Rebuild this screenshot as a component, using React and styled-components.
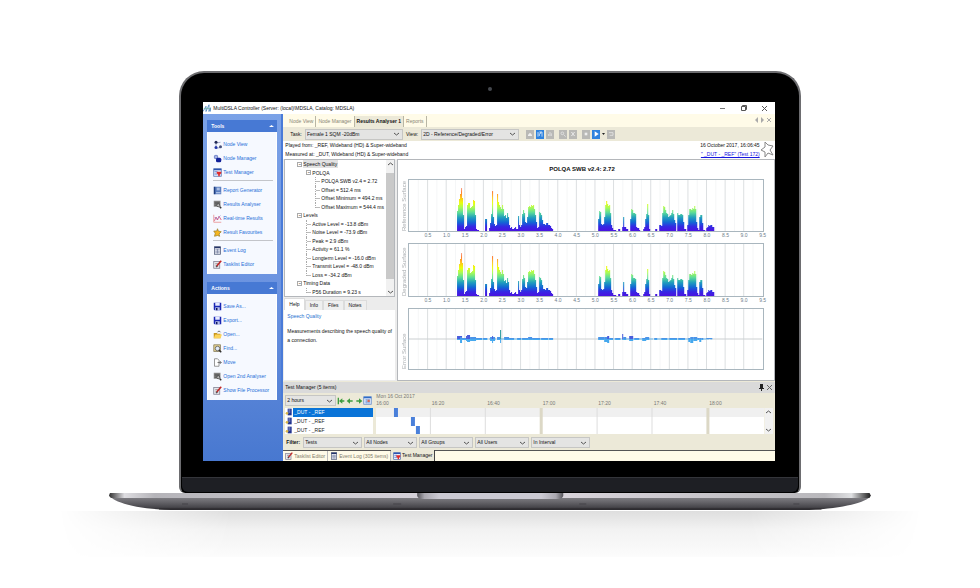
import React from 'react'
import styled, { createGlobalStyle } from 'styled-components'

const sidebar = [
	{
		title: 'Tools',
		items: [
			{ icon: 'nodes', text: 'Node View' },
			{ icon: 'manager', text: 'Node Manager' },
			{ icon: 'test', text: 'Test Manager' },
			null,
			{ icon: 'report', text: 'Report Generator' },
			{ icon: 'analyser', text: 'Results Analyser' },
			{ icon: 'chart', text: 'Real-time Results' },
			{ icon: 'star', text: 'Result Favourites' },
			null,
			{ icon: 'log', text: 'Event Log' },
			{ icon: 'edit', text: 'Tasklist Editor' },
		],
	},
	{
		title: 'Actions',
		items: [
			{ icon: 'save', text: 'Save As...' },
			{ icon: 'save', text: 'Export...' },
			{ icon: 'open', text: 'Open...' },
			{ icon: 'find', text: 'Find...' },
			{ icon: 'move', text: 'Move' },
			{ icon: 'analyser', text: 'Open 2nd Analyser' },
			{ icon: 'edit', text: 'Show File Processor' },
		],
	},
]

const tree = [
	{ level: 0, text: 'Speech Quality', selected: true },
	{ level: 1, text: 'POLQA' },
	{ level: 2, text: 'POLQA SWB v2.4 = 2.72' },
	{ level: 2, text: 'Offset = 512.4 ms' },
	{ level: 2, text: 'Offset Minimum = 494.2 ms' },
	{ level: 2, text: 'Offset Maximum = 544.4 ms', last: true },
	{ level: 0, text: 'Levels' },
	{ level: 1, leaf: true, text: 'Active Level = -13.8 dBm' },
	{ level: 1, leaf: true, text: 'Noise Level = -73.9 dBm' },
	{ level: 1, leaf: true, text: 'Peak = 2.9 dBm' },
	{ level: 1, leaf: true, text: 'Activity = 61.1 %' },
	{ level: 1, leaf: true, text: 'Longterm Level = -16.0 dBm' },
	{ level: 1, leaf: true, text: 'Transmit Level = -48.0 dBm' },
	{ level: 1, leaf: true, text: 'Loss = -34.2 dBm', last: true },
	{ level: 0, text: 'Timing Data' },
	{ level: 1, leaf: true, text: 'P56 Duration = 9.23 s', last: true },
]

// [position, height] steps of the speech envelope
const envelope = [
	[48, 20], [49, 26], [50, 32], [51, 37], [52, 43], [53, 33], [54, 16], [55, 2], [56, 4], [57, 5],
	[58, 26], [59, 28], [60, 28], [61, 23], [62, 24], [63, 25], [64, 31], [65, 30], [66, 16], [67, 2],
	[68, 1], [70, 0], [76, 12], [78, 0], [80, 3], [81, 8], [82, 17], [83, 40], [84, 14], [85, 7],
	[86, 5], [87, 6], [88, 37], [89, 29], [90, 26], [91, 24], [92, 22], [93, 26], [94, 22], [95, 15],
	[96, 16], [97, 13], [98, 18], [99, 14], [100, 6], [101, 3], [102, 4], [103, 2], [105, 3], [106, 4],
	[107, 2], [109, 15], [110, 6], [111, 4], [112, 6], [113, 17], [114, 21], [115, 18], [116, 9],
	[117, 8], [118, 14], [119, 24], [120, 25], [121, 24], [122, 26], [123, 25], [124, 26], [125, 22],
	[126, 16], [127, 9], [128, 3], [129, 4], [130, 19], [131, 18], [132, 16], [133, 11], [134, 7],
	[136, 6], [137, 8], [139, 6], [141, 5], [142, 3], [143, 2], [144, 0],
	[189, 12], [190, 20], [191, 19], [192, 7], [193, 6], [194, 7], [195, 14], [196, 26], [197, 30],
	[198, 27], [199, 25], [200, 26], [201, 18], [202, 6], [203, 3], [204, 1], [207, 0], [209, 2],
	[211, 0], [213, 4], [214, 14], [215, 4], [217, 2], [219, 0], [221, 12], [222, 22], [223, 21],
	[224, 18], [226, 17], [227, 4], [228, 3], [230, 1], [231, 0], [234, 2], [235, 4], [236, 12],
	[237, 17], [238, 27], [239, 16], [240, 2], [241, 0], [246, 2], [248, 0], [250, 6], [252, 5],
	[253, 18], [254, 25], [255, 24], [256, 21], [257, 18], [258, 17], [259, 14], [260, 15], [261, 16],
	[262, 18], [263, 21], [264, 17], [265, 11], [266, 8], [267, 0], [268, 18], [269, 16], [271, 17],
	[273, 16], [274, 9], [275, 2], [277, 0], [278, 6], [279, 16], [280, 22], [282, 21], [283, 23],
	[284, 22], [285, 25], [286, 22], [287, 9], [288, 3], [289, 1], [290, 14], [291, 16], [293, 8],
	[294, 1], [296, 0], [297, 3], [298, 4], [299, 6], [300, 5], [301, 6], [303, 4], [305, 0],
]

// [position, width, above, below]
const errors = [
	[48, 5, 3, 1], [51, 2, 2, 4], [53, 4, 1, 1], [57, 1, 3, 2], [58, 3, 4, 3], [61, 6, 2, 2],
	[67, 6, 1, 1], [74, 4, 1, 1], [81, 5, 2, 2], [83, 1, 3, 4], [88, 3, 2, 1], [91, 1, 9, 4],
	[95, 5, 2, 1], [100, 5, 1, 1], [108, 4, 1, 1], [113, 6, 1, 1], [119, 4, 2, 1], [123, 8, 1, 1],
	[132, 7, 1, 1], [140, 4, 1, 1], [189, 6, 2, 1], [195, 4, 2, 3], [198, 2, 3, 4], [200, 4, 1, 1],
	[206, 5, 1, 1], [213, 1, 5, 1], [214, 3, 2, 1], [220, 4, 3, 2], [225, 5, 1, 1], [233, 4, 1, 2],
	[236, 4, 2, 1], [245, 3, 1, 1], [252, 6, 1, 1], [260, 8, 1, 1], [269, 7, 1, 1], [279, 2, 1, 3],
	[281, 3, 2, 4], [284, 4, 2, 2], [288, 2, 1, 1], [290, 2, 1, 3], [292, 2, 1, 1], [297, 6, 1, 0],
]

const axis = Array.from({ length: 19 }, (_, i) => ((i + 1) / 2).toFixed(1))
const times = ['16:00', '16:20', '16:40', '17:00', '17:20', '17:40', '18:00']
const filters = [
	['Tests', 59], ['All Nodes', 53], ['All Groups', 54], ['All Users', 54], ['In Interval', 59],
]
const toolIcons = ['disk', 'wave', 'bars', null, 'zoomin', 'zoomout', null, 'stop', 'play', 'drop', 'loop']

function envelopePath(height) {
	let d = `M0 ${height}`
	envelope.forEach(([x, h]) => {
		d += `H${x}V${height - h}`
	})
	return `${d}V${height}Z`
}

function Icon({ name, size = 9 }) {
	const art = {
		nodes: <g><path d="M4 4l6-1M4 5v6M5 11l5-1" stroke="#8a93b8" /><circle cx="4" cy="3" r="2" fill="#222a55" /><circle cx="4" cy="10" r="2" fill="#2438a8" /><circle cx="10" cy="9" r="2" fill="#46507a" /></g>,
		manager: <g><circle cx="4" cy="4" r="3" fill="#7d8fd0" /><rect x="4" y="5" width="7" height="6" rx="2" fill="#12229a" /><circle cx="4" cy="4" r="1" fill="#e8edff" /></g>,
		test: <g><rect x="1" y="1" width="10" height="10" fill="#e9eefc" stroke="#4a6db0" /><path d="M1 2h10" stroke="#2d54b0" strokeWidth="2" /><path d="M2 5h4M2 8h4" stroke="#3a66c8" /><path d="M5 5h6v2L9 9v2H7V9L5 7z" fill="#e02b2b" /></g>,
		calendar: <g><rect x="1" y="1" width="10" height="10" fill="#dfe8fb" stroke="#5d86c8" /><path d="M1 2h10" stroke="#2f6cc8" strokeWidth="2" /><path d="M3 5h6M3 7h6M3 9h6M5 4v6M8 4v6" stroke="#7fa0d8" /><rect x="6" y="5" width="3" height="3" fill="#d66a5a" /></g>,
		report: <g><rect x="2" y="1" width="9" height="10" fill="#5c7fc0" /><rect x="1" y="1" width="2" height="10" fill="#1e3d80" /><path d="M5 3h4M5 5h4M4 9h6" stroke="#e9f0ff" /></g>,
		analyser: <g><rect x="1" y="1" width="9" height="8" fill="#8d8d8d" /><path d="M2 3h7M2 5h7M2 7h5" stroke="#444" /><circle cx="7" cy="7" r="2" fill="#bbb" stroke="#444" /><path d="M9 9l2 2" stroke="#333" strokeWidth="2" /></g>,
		chart: <g><path d="M1 1v10h10" stroke="#e78787" fill="none" /><path d="M2 9l2-5 2 4 2-5 3 5" stroke="#d83a5a" fill="none" /><path d="M2 4l3 3 5-5" stroke="#9a8bd8" fill="none" /></g>,
		star: <path d="M6 1l1 3 4 1-3 3 1 3-3-1-4 1 1-4-2-3 4 0z" fill="#f6b61e" stroke="#9c8130" />,
		log: <g><rect x="2" y="1" width="8" height="10" fill="#f3f5fa" stroke="#4a5675" /><path d="M2 2h8" stroke="#253468" strokeWidth="2" /><path d="M3 5h6M3 7h6M3 9h6M6 4v6" stroke="#7c86a6" /></g>,
		edit: <g><rect x="1" y="2" width="8" height="9" fill="#e8e8ee" stroke="#7b7b8c" /><path d="M3 5h4M3 8h4" stroke="#777" /><path d="M11 1L5 8" stroke="#c42626" strokeWidth="2" /><path d="M5 7l-1 3 2-1z" fill="#222" /></g>,
		save: <g><path d="M1 1h10v10H2l-1-1z" fill="#1926b4" /><rect x="3" y="1" width="6" height="4" fill="#e6eaff" /><rect x="3" y="7" width="6" height="4" fill="#b9c2ea" /><rect x="4" y="8" width="2" height="3" fill="#101860" /></g>,
		open: <g><path d="M1 4h4l1 1h4v6H1z" fill="#c7951c" /><path d="M3 6h9l-2 5H1z" fill="#fbd35a" /><path d="M6 3c1-2 3-2 4 0" fill="none" stroke="#444" /></g>,
		find: <g><path d="M1 1h9v9H1z" fill="#e3cf8b" stroke="#83795c" /><circle cx="6" cy="6" r="3" fill="#dfeafa" stroke="#555" /><path d="M8 8l3 3" stroke="#333" strokeWidth="2" /></g>,
		move: <g><path d="M2 1h4l2 2v8H2z" fill="#fff" stroke="#777" /><path d="M6 6h5M9 4l2 2-2 2" fill="none" stroke="#555" /></g>,
		node: <g><rect x="4" y="1" width="6" height="10" fill="#22338f" /><path d="M5 3h3M5 6h3" stroke="#e9ecff" /><circle cx="3" cy="8" r="2" fill="#d8b64a" /></g>,
		disk: <path d="M3 9V7l3-3 3 3v2z" fill="#eee" />,
		wave: <path d="M3 3v7M5 5v4M7 3v3M9 3v7M5 3h4" stroke="#fff" fill="none" />,
		bars: <path d="M4 9V6M6 9V3M8 9V5" stroke="#eee" />,
		zoomin: <path d="M3 5a2 2 0 104 0 2 2 0 10-4 0M7 7l3 3" stroke="#eee" fill="none" />,
		zoomout: <path d="M3 3l6 6M9 3L3 9M6 3v6" stroke="#eee" />,
		stop: <rect x="4" y="4" width="4" height="4" fill="#eee" />,
		play: <path d="M4 2l6 4-6 4z" fill="#fff" />,
		loop: <path d="M3 4h6v4H4" stroke="#eee" fill="none" />,
		logo: <g fill="none" stroke="#3e7cb8"><path d="M0 10l4-7v7M4 10l4-9v9M8 10l2-5v5" /><path d="M1 6h9" stroke="#75b9a5" /></g>,
		arrow: <path d="M1 6l5-4v3h4v2H6v3z" fill="#3f9c3f" />,
		arrowr: <path d="M11 6L6 2v3H2v2h4v3z" fill="#3f9c3f" />,
		first: <g><path d="M2 1v10" stroke="#3f9c3f" strokeWidth="2" /><path d="M3 6l5-4v3h3v2H8v3z" fill="#3f9c3f" /></g>,
	}
	return <svg width={size} height={size} viewBox="0 0 12 12" aria-hidden="true">{art[name]}</svg>
}

function Grid({ height }) {
	return (
		<g>
			{Array.from({ length: 37 }, (_, i) => (
				<path key={i} d={`M${(i + 1) * 353 / 38} 0V${height}`} stroke={i % 2 ? '#dcdfe1' : '#f5f6f7'} />
			))}
		</g>
	)
}

function Surface({ label, height, name }) {
	return (
		<>
			<AxisName $above={8}>{label}</AxisName>
			<div>
				<Plot height={height} viewBox={`0 0 353 ${height}`} preserveAspectRatio="none" role="img" aria-label={label}>
					<linearGradient id={name} gradientUnits="userSpaceOnUse" x1="0" x2="0" y1={height} y2={height - 44}>
						<stop offset="0" stopColor="#4a12e0" />
						<stop offset=".1" stopColor="#3528e4" />
						<stop offset=".2" stopColor="#1268d4" />
						<stop offset=".31" stopColor="#22a0bc" />
						<stop offset=".42" stopColor="#5cdc98" />
						<stop offset=".53" stopColor="#a8fa58" />
						<stop offset=".64" stopColor="#eaff08" />
						<stop offset=".76" stopColor="#ffc21c" />
						<stop offset=".88" stopColor="#ff7a2a" />
						<stop offset="1" stopColor="#f7a79c" />
					</linearGradient>
					<Grid height={height} />
					<path d={envelopePath(height)} fill={`url(#${name})`} />
				</Plot>
				<Axis>{axis.map((a) => <span key={a}>{a}</span>)}</Axis>
			</div>
		</>
	)
}

function Drop({ label, value, width }) {
	return (
		<DropBox $width={width}>
			<select aria-label={label} defaultValue={value}><option>{value}</option></select>
			<Chevron />
		</DropBox>
	)
}

function Chevron({ up }) {
	return <svg width="5" height="4" viewBox="0 0 5 4"><path d={up ? 'M0 3l2.500-2L5 3' : 'M0 1l2.500 2L5 1'} fill="none" stroke="#555" /></svg>
}

function Sidebar() {
	return (
		<Side>
			{sidebar.map((group) => (
				<Group key={group.title}>
					<GroupTitle>{group.title}<svg width="5" height="4" viewBox="0 0 5 4"><path d="M0 3l2.500-2L5 3z" fill="#fff" /></svg></GroupTitle>
					<GroupBody>
						{group.items.map((item, i) => item
							? <SideLink href="#" key={i}><Icon name={item.icon} />{item.text}</SideLink>
							: <Rule key={i} />)}
					</GroupBody>
				</Group>
			))}
		</Side>
	)
}

function Results() {
	return (
		<Split>
			<Left>
				<TreeBox>
					<Tree>
						{tree.map((n) => (
							<Branch key={n.text} $level={n.level} $selected={n.selected} $last={n.last}>
								{n.leaf || n.level === 2 ? <i /> : <b>−</b>}<span>{n.text}</span>
							</Branch>
						))}
					</Tree>
					<Scroll><Chevron up /><div /><Chevron /></Scroll>
				</TreeBox>
				<InfoTabs>
					<InfoTab $on>Help</InfoTab><InfoTab>Info</InfoTab><InfoTab>Files</InfoTab><InfoTab>Notes</InfoTab>
				</InfoTabs>
				<Help>
					<h2>Speech Quality</h2>
					<p>Measurements describing the speech quality of a connection.</p>
				</Help>
			</Left>
			<Charts>
				<ChartTitle>POLQA SWB v2.4: 2.72</ChartTitle>
				<ChartGrid>
					<Surface label="Reference Surface" name="ref" height={51} />
					<Surface label="Degraded Surface" name="deg" height={52} />
					<AxisName $above={0}>Error Surface</AxisName>
					<Plot height={60} viewBox="0 0 353 60" preserveAspectRatio="none" role="img" aria-label="Error Surface">
						<Grid height={60} />
						<path d="M0 30H353" stroke="#ccd0d2" />
						<path d="M48 30H144M189 30H303" stroke="#6cbcf0" strokeDasharray="7 1" />
						{errors.map(([x, w, up, down]) => (
							<g key={x}>
								<rect x={x} y={30 - up} width={w} height={up} fill={up > 6 ? '#299c9c' : up > 2 ? '#4a5cdc' : '#4a94e8'} />
								<rect x={x} y={30} width={w} height={down} fill="#46a8ee" />
							</g>
						))}
					</Plot>
				</ChartGrid>
			</Charts>
		</Split>
	)
}

function TestManager() {
	return (
		<Dock>
			<DockTitle>Test Manager (5 items)
				<span>
					<svg width="5" height="7" viewBox="0 0 5 7"><path d="M1 0h3v4h1v1H0V4h1zM2 5h1v2H2z" fill="#222" /></svg>
					<svg width="5" height="5" viewBox="0 0 5 5"><path d="M0 0l5 5M5 0L0 5" stroke="#666" /></svg>
				</span>
			</DockTitle>
			<Schedule>
				<ScheduleTools>
					<Drop label="Duration" value="2 hours" width={51} />
					<Icon name="first" size={8} /><Icon name="arrow" size={8} /><Icon name="arrowr" size={8} /><Icon name="calendar" size={9} />
				</ScheduleTools>
				<TimeHead>
					<div>Mon 16 Oct 2017</div>
					<Times>{times.map((t) => <span key={t}>{t}</span>)}</Times>
				</TimeHead>
				<Rows>
					{[0, 1, 2].map((i) => <Row key={i} $on={i === 0}><Icon name="node" size={8} /><span>_DUT - _REF</span></Row>)}
				</Rows>
				<Timeline>
					<svg width="100%" height="26" viewBox="0 0 389 26" preserveAspectRatio="none">
						<rect width="389" height="26" fill="#fff" />
						<rect width="389" height="9" fill="#f0f0f0" />
						<path d="M54.500 0v26M109.500 0v26M221.500 0v26M276.500 0v26" stroke="#ddd" />
						<path d="M165.500 0v26M332.500 0v26" stroke="#dcd8c6" strokeWidth="3" />
						<path d="M18 0h4v9h-4zM35 9h4v9h-4zM40 18h4v8h-4z" fill="#4a80da" />
					</svg>
					<Scroll><Chevron up /><Chevron /></Scroll>
				</Timeline>
			</Schedule>
			<Filters>
				<b>Filter:</b>
				{filters.map(([f, w]) => <Drop key={f} label={f} value={f} width={w} />)}
			</Filters>
			<DockTabs>
				<DockTab><Icon name="edit" size={8} />Tasklist Editor</DockTab>
				<DockTab><Icon name="log" size={8} />Event Log (305 items)</DockTab>
				<DockTab $on><Icon name="test" size={8} />Test Manager</DockTab>
			</DockTabs>
		</Dock>
	)
}

function Base() {
	return (
		<BaseSvg viewBox="0 0 762 18" preserveAspectRatio="none" aria-hidden="true">
			<linearGradient id="under" x1="0" x2="0" y1="0" y2="1">
				<stop offset="0" stopColor="#8b8a8f" />
				<stop offset=".45" stopColor="#68676c" />
				<stop offset=".8" stopColor="#48474c" />
				<stop offset="1" stopColor="#2c2b2f" />
			</linearGradient>
			<linearGradient id="deck">
				<stop offset="0" stopColor="#333" />
				<stop offset=".02" stopColor="#dedde1" />
				<stop offset=".06" stopColor="#b5b4b9" />
				<stop offset=".4" stopColor="#d4d0d8" />
				<stop offset=".6" stopColor="#d8d3da" />
				<stop offset=".94" stopColor="#b9b8bc" />
				<stop offset=".975" stopColor="#dfe0e2" />
				<stop offset="1" stopColor="#222" />
			</linearGradient>
			<linearGradient id="notch">
				<stop offset="0" stopColor="#55545a" />
				<stop offset=".05" stopColor="#aaa8b0" />
				<stop offset=".15" stopColor="#cbc9d2" />
				<stop offset=".85" stopColor="#cbc9d2" />
				<stop offset=".95" stopColor="#aaa8b0" />
				<stop offset="1" stopColor="#55545a" />
			</linearGradient>
			<path d="M0 2C4 9 26 16 62 17H700C736 15 758 9 762 2z" fill="url(#under)" />
			<path d="M1 0H760Q762 2 760 5H2Q-1 3 1 0z" fill="url(#deck)" />
			<path d="M308 0H454V3Q453 6 449 6H313Q309 6 308 3z" fill="url(#notch)" />
			<path d="M50 16H712" stroke="#2b292d" />
			<path d="M73 11h6M284 11h8M470 11h7M684 11h6" stroke="#444348" />
		</BaseSvg>
	)
}

function App() {
	return (
		<Stage>
			<GlobalStyle />
			<Lid>
				<Camera />
				<Screen>
					<TitleBar>
						<Icon name="logo" size={9} />
						<h1>MultiDSLA Controller (Server: (local)\MDSLA, Catalog: MDSLA)</h1>
						<WindowButton aria-label="Minimise"><svg width="6" height="6"><path d="M0 3.500h5" stroke="#777" /></svg></WindowButton>
						<WindowButton aria-label="Restore"><svg width="6" height="6"><path d="M.5 1.500h4v4h-4zM1.500 1.500v-1h4v4h-1" fill="none" stroke="#555" /></svg></WindowButton>
						<WindowButton aria-label="Close"><svg width="5" height="5"><path d="M0 0l5 5M5 0L0 5" stroke="#555" /></svg></WindowButton>
					</TitleBar>
					<Body>
						<Sidebar />
						<Main>
							<Tabs>
								<Tab>Node View</Tab><Tab>Node Manager</Tab><Tab $on>Results Analyser 1</Tab><Tab>Reports</Tab>
								<svg width="17" height="6" viewBox="0 0 17 6"><path d="M3 0v6L0 3zM6 0v6l3-3z" fill="#aaa" /><path d="M12 1l4 4M16 1l-4 4" stroke="#aaa" /></svg>
							</Tabs>
							<Toolbar>
								<span>Task:</span><Drop label="Task" value="Female 1 SQM -20dBm" width={98} />
								<span>View:</span><Drop label="View" value="2D - Reference/Degraded/Error" width={98} />
								<Tools>
									{toolIcons.map((t, i) => {
										if (!t) return <Gap key={i} />
										if (t === 'drop') return <svg key={t} width="3" height="3" viewBox="0 0 3 3"><path d="M0 0h3L1.500 2z" fill="#222" /></svg>
										return <ToolButton key={t} aria-label={t} $blue={t === 'wave' || t === 'play'}><Icon name={t} size={8} /></ToolButton>
									})}
								</Tools>
							</Toolbar>
							<Summary>
								<div>Played from: _REF, Wideband (HD) &amp; Super-wideband<br />Measured at: _DUT, Wideband (HD) &amp; Super-wideband</div>
								<Stamp>16 October 2017, 16:06:45<br /><a href="#">" _DUT - _REF" (Test 172)</a></Stamp>
								<svg width="14" height="17" viewBox="0 0 14 17"><path d="M5 1l3 3 5 1-3 4 3 5-5-2-3 4V11L1 9l4-3z" fill="#fff" stroke="#888" /></svg>
							</Summary>
							<Results />
							<TestManager />
						</Main>
					</Body>
				</Screen>
				<Chin />
			</Lid>
			<Base />
			<Shadow />
		</Stage>
	)
}

const GlobalStyle = createGlobalStyle`
	* { box-sizing: border-box; }
	body {
		margin: 0;
		background: #fff;
		font-family: "Liberation Sans", Arial, sans-serif;
		font-size: 5px;
		line-height: 9px;
		color: #111;
	}
	svg { display: block; flex: none; }
	button { border: 0; padding: 0; background: none; font: inherit; color: inherit; }
	h1, h2, p, ul { margin: 0; padding: 0; font-size: 5px; font-weight: normal; }
`;
const Stage = styled.div`
	display: flex;
	flex-direction: column;
	align-items: center;
	min-height: 588px;
	padding-top: 71px;
`;
const Lid = styled.div`
	width: 63.4%;
	background: #000;
	border: 2px solid #6d6d70;
	border-bottom: 0;
	border-radius: 25px 25px 6px 6px;
	padding: 0 0 1px;
`;
const Camera = styled.div`
	width: 4px;
	height: 4px;
	margin: 14px auto 11px;
	border-radius: 50%;
	background: #45484e;
`;
const Screen = styled.div`
	margin: 0 24px 0 22px;
	background: #fff;
	overflow: hidden;
`;
const Chin = styled.div`
	height: 15px;
	margin: 16px 1px 0;
	background: #1e1f24;
	border-top: 1px solid #34353a;
	border-radius: 0 0 6px 6px;
`;
const BaseSvg = styled.svg`
	width: 77.8%;
	height: 18px;
`;
const Shadow = styled.div`
	width: 88%;
	height: 46px;
	background: linear-gradient(#dedede, #f2f2f2 40%, #fcfcfc);
	mask-image: linear-gradient(90deg, transparent, #000 20%, #000 80%, transparent);
`;
const TitleBar = styled.header`
	display: flex;
	align-items: center;
	height: 12px;
	gap: 1px;
	h1 { flex: 1; white-space: nowrap; }
`;
const WindowButton = styled.button`
	width: 20px;
	display: flex;
	justify-content: center;
`;
const Body = styled.div`
	display: flex;
`;
const Side = styled.aside`
	width: 80px;
	flex: none;
	padding: 6px 4px 0;
	background: linear-gradient(#7ba2e7, #6b93e0 50%, #4878d0);
	border-right: 2px solid #4a7bd8;
`;
const Group = styled.section`
	margin-bottom: 8px;
`;
const GroupTitle = styled.h2`
	display: flex;
	align-items: center;
	justify-content: space-between;
	height: 12px;
	padding: 0 3px 0 4px;
	background: #4779d4;
	color: #fff;
	font-weight: bold;
`;
const GroupBody = styled.nav`
	padding: 5px 3px 3px 5px;
	background: #f6f9ff;
	border: solid #fff;
	border-width: 0 1px;
`;
const SideLink = styled.a`
	display: flex;
	align-items: center;
	gap: 1px;
	height: 14px;
	color: #1f6fd8;
	text-decoration: none;
	white-space: nowrap;
`;
const Rule = styled.hr`
	margin: 1px 0 2px;
	border: 0;
	height: 1px;
	background: #c3c5ca;
`;
const Main = styled.main`
	flex: 1;
	min-width: 0;
`;
const Tabs = styled.div`
	display: flex;
	align-items: flex-end;
	height: 13px;
	padding: 0 3px 0 4px;
	background: #fffbe8;
	> svg { margin: 0 0 4px auto; }
`;
const Tab = styled.button`
	height: 11px;
	padding: 0 2px;
	border-right: 1px solid #b9b6a4;
	color: ${(p) => (p.$on ? '#111' : '#8a8674')};
	font-weight: ${(p) => (p.$on ? 'bold' : 'normal')};
	background: ${(p) => (p.$on ? '#ece9d8' : 'none')};
`;
const Toolbar = styled.div`
	display: flex;
	align-items: center;
	gap: 3px;
	height: 14px;
	padding-left: 7px;
	background: #ece9d8;
`;
const DropBox = styled.div`
	display: flex;
	align-items: center;
	width: ${(p) => p.$width}px;
	height: 11px;
	border: 1px solid #c6c6c4;
	background: #e4e4e3;
	padding-right: 3px;
	select {
		appearance: none;
		flex: 1;
		min-width: 0;
		height: 9px;
		padding: 0 1px;
		border: 0;
		background: none;
		color: #111;
		font: inherit;
		line-height: 9px;
	}
`;
const Tools = styled.div`
	display: flex;
	align-items: center;
	gap: 2px;
	padding-left: 4px;
`;
const Gap = styled.span`
	width: 1px;
`;
const ToolButton = styled.button`
	width: 8px;
	height: 9px;
	background: ${(p) => (p.$blue ? '#2f83de' : '#b9b9b6')};
`;
const Summary = styled.div`
	display: flex;
	height: 18px;
	padding: 0 1px 0 2px;
	> :first-child { flex: 1; white-space: nowrap; }
`;
const Stamp = styled.div`
	text-align: right;
	white-space: nowrap;
	a { color: #1414e0; }
`;
const Split = styled.div`
	display: flex;
	height: 222px;
	background: #ececec;
`;
const Left = styled.div`
	display: flex;
	flex-direction: column;
	width: 114px;
	padding: 0 2px 1px 1px;
	flex: none;
`;
const TreeBox = styled.div`
	display: flex;
	height: 138px;
	background: #fff;
	border: 1px solid #b4b7bb;
`;
const Tree = styled.ul`
	display: flex;
	flex-direction: column;
	flex: 1;
	list-style: none;
	padding-left: 12px;
`;
const Branch = styled.li`
	display: flex;
	align-items: center;
	gap: 1px;
	flex: 1;
	min-height: 0;
	padding-left: ${(p) => p.$level * 9}px;
	white-space: nowrap;
	b {
		width: 5px;
		height: 5px;
		border: 1px solid #aaa;
		font-size: 4px;
		line-height: 3px;
		text-align: center;
	}
	i {
		align-self: flex-start;
		width: 5px;
		height: ${(p) => (p.$last ? '5px' : '100%')};
		border-left: 1px dotted #aaa;
		background: linear-gradient(#bbb, #bbb) 0 4px / 100% 1px no-repeat;
	}
	span {
		padding-right: 1px;
		line-height: 8px;
		background: ${(p) => (p.$selected ? '#e2e2e2' : 'none')};
	}
`;
const Scroll = styled.div`
	display: flex;
	flex-direction: column;
	align-items: center;
	justify-content: space-between;
	width: 8px;
	padding: 2px 0;
	background: #f1f1f1;
	div {
		flex: 1;
		width: 100%;
		margin: 7px 0 11px;
		background: #c9c9c9;
	}
`;
const InfoTabs = styled.div`
	display: flex;
	align-items: flex-end;
	height: 13px;
`;
const InfoTab = styled.button`
	height: ${(p) => (p.$on ? 12 : 10)}px;
	padding: 0 4px;
	background: ${(p) => (p.$on ? '#fff' : '#efefef')};
	border: 1px solid #dcdcdc;
	border-bottom: 0;
`;
const Help = styled.article`
	flex: 1;
	padding: 2px 3px;
	background: #fff;
	h2 { color: #2470d0; margin-bottom: 6px; }
`;
const Charts = styled.section`
	flex: 1;
	min-width: 0;
	padding: 5px 11px 0 3px;
	background: #fff;
	border: 1px solid #b4b7bb;
`;
const ChartTitle = styled.h2`
	margin-bottom: 6px;
	font-weight: bold;
	font-size: 6px;
	text-align: center;
`;
const ChartGrid = styled.div`
	display: grid;
	grid-template-columns: 8px 1fr;
	row-gap: 5px;
`;
const AxisName = styled.div`
	writing-mode: vertical-rl;
	transform: rotate(180deg);
	padding-top: ${(p) => p.$above}px;
	font-size: 6px;
	line-height: 7px;
	color: #a9adb0;
	white-space: nowrap;
`;
const Plot = styled.svg`
	width: 100%;
	height: ${(p) => p.height}px;
	outline: 1px solid #a9b6be;
`;
const Axis = styled.div`
	display: grid;
	grid-template-columns: repeat(19, 1fr);
	margin: 0 calc(-50% / 19) 0 calc(50% / 19);
	text-align: center;
	line-height: 8px;
	color: #6d7d8a;
`;
const Dock = styled.section`
	padding-top: 1px;
	background: #ece9d8;
`;
const DockTitle = styled.h2`
	display: flex;
	justify-content: space-between;
	height: 11px;
	line-height: 11px;
	padding: 0 3px 0 2px;
	background: #dadada;
	span { display: flex; align-items: center; gap: 3px; }
`;
const Schedule = styled.div`
	display: grid;
	grid-template-columns: 88px 1fr;
	column-gap: 3px;
	padding: 0 2px 2px;
`;
const ScheduleTools = styled.div`
	display: flex;
	align-items: center;
	justify-content: space-between;
	padding-right: 1px;
	height: 15px;
`;
const TimeHead = styled.div`
	line-height: 7px;
	color: #777;
`;
const Times = styled.div`
	display: grid;
	grid-template-columns: repeat(7, 1fr);
	padding-right: 8px;
`;
const Rows = styled.div`
	height: 26px;
	overflow: hidden;
	background: #fff;
`;
const Row = styled.div`
	display: flex;
	height: 9px;
	span {
		flex: 1;
		padding-left: 1px;
		color: ${(p) => (p.$on ? '#fff' : '#222')};
		background: ${(p) => (p.$on ? '#0a74d8' : 'none')};
	}
`;
const Timeline = styled.div`
	display: flex;
	min-width: 0;
	> svg { flex: 1; min-width: 0; }
`;
const Filters = styled.div`
	display: flex;
	align-items: center;
	gap: 2px;
	height: 13px;
	padding-left: 3px;
	b { width: 15px; }
`;
const DockTabs = styled.div`
	display: flex;
	height: 11px;
	margin-top: 1px;
	background: #fffbe8;
	border-top: 1px solid #555;
`;
const DockTab = styled.button`
	display: flex;
	align-items: center;
	gap: 1px;
	margin-top: ${(p) => (p.$on ? '-1px' : 0)};
	padding: 0 2px;
	border-right: 1px solid ${(p) => (p.$on ? '#444' : '#bbb')};
	background: ${(p) => (p.$on ? '#ece9d8' : 'none')};
	color: ${(p) => (p.$on ? '#111' : '#7f7b6b')};
`;

export default App
